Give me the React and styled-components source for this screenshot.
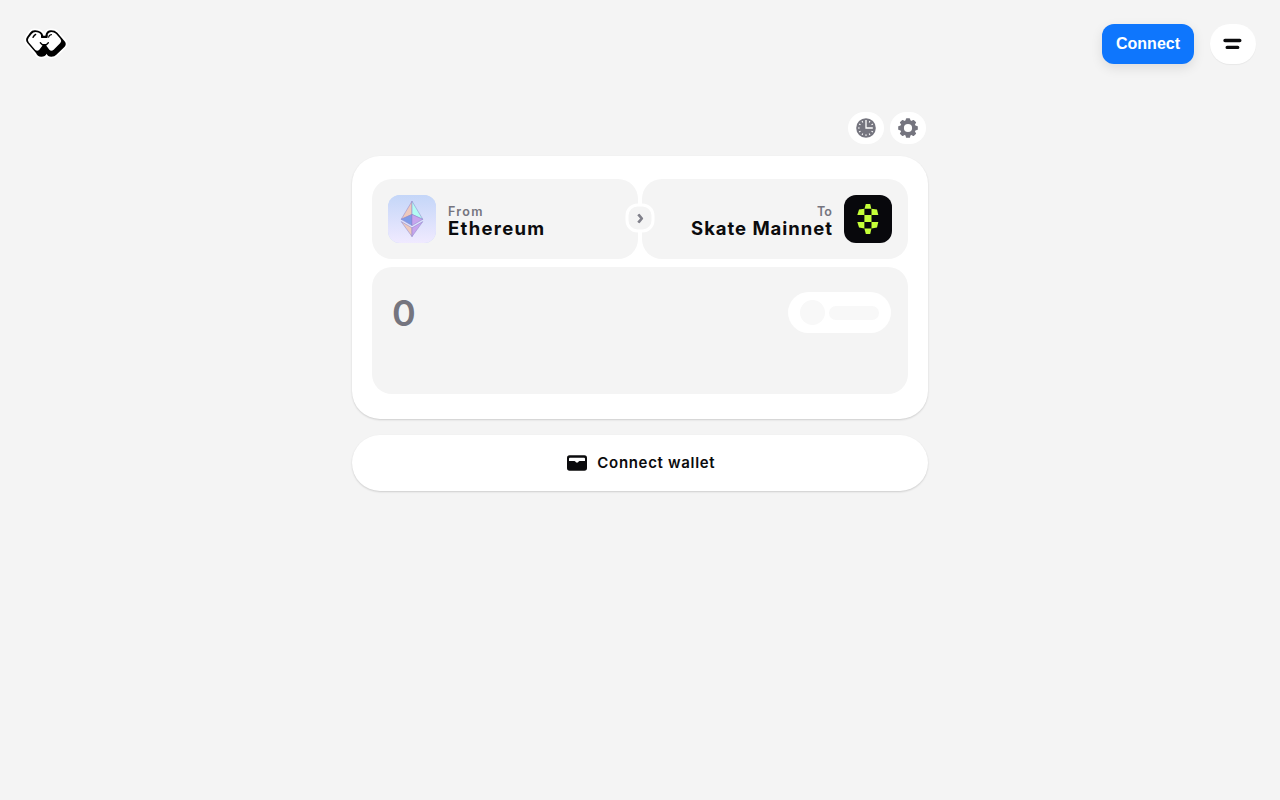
import React from 'react'
import styled, { createGlobalStyle } from 'styled-components'

const GlobalStyle = createGlobalStyle`
    * {
        box-sizing: border-box;
    }
    body {
        margin: 0;
        background: #f4f4f4;
        color: #0b0b0d;
        font-family: Inter, "Liberation Sans", sans-serif;
    }
    button {
        border: none;
        padding: 0;
        font-family: inherit;
        color: inherit;
        cursor: pointer;
    }
    svg {
        display: block;
        flex-shrink: 0;
    }
`
const Page = styled.div`
    min-height: 100vh;
`
const Header = styled.header`
    height: 88px;
    padding: 24px;
    display: flex;
    justify-content: space-between;
`
const HeaderRight = styled.div`
    display: flex;
    gap: 16px;
`
const ConnectButton = styled.button`
    width: 92px;
    height: 40px;
    border-radius: 12px;
    background: #0e76fd;
    color: #fff;
    font: bold 16px/20px "Liberation Sans", Arial, sans-serif;
    box-shadow: 0 4px 12px rgba(0, 0, 0, 0.1);
`
const RoundButton = styled.button`
    width: ${(p) => p.$width}px;
    height: ${(p) => p.$height}px;
    border-radius: 20px;
    background: #fff;
    display: flex;
    align-items: center;
    justify-content: center;
    box-shadow: ${(p) => (p.$raised ? '0 1px 1px rgba(0, 0, 0, 0.05)' : 'none')};
`
const Main = styled.main`
    width: 576px;
    margin: 0 auto;
    padding-top: 24px;
`
const Toolbar = styled.div`
    display: flex;
    justify-content: flex-end;
    gap: 6px;
    padding-right: 2px;
    margin-bottom: 12px;
`
const Card = styled.section`
    height: 263px;
    padding: 23px 20px 25px;
    border-radius: 28px;
    background: #fff;
    box-shadow: 0 1px 2px rgba(0, 0, 0, 0.16);
    display: flex;
    flex-direction: column;
    gap: 8px;
`
const Chains = styled.div`
    position: relative;
    display: flex;
    gap: 4px;
`
const ChainBox = styled.div`
    flex: 1;
    height: 80px;
    padding: 16px;
    border-radius: 20px;
    background: #f4f4f4;
    display: flex;
    align-items: center;
    gap: 12px;
    flex-direction: ${(p) => (p.$reverse ? 'row-reverse' : 'row')};
    text-align: ${(p) => (p.$reverse ? 'right' : 'left')};
`
const ChainIcon = styled.div`
    width: 48px;
    height: 48px;
    border-radius: 12px;
    overflow: hidden;
    background: ${(p) => p.$bg};
`
const ChainText = styled.div`
    display: flex;
    flex-direction: column;
    padding-top: 6px;
`
const Label = styled.span`
    font-size: 12.5px;
    line-height: 14px;
    font-weight: 600;
    letter-spacing: ${(p) => p.$spacing};
    margin-right: -${(p) => p.$spacing};
    color: #75757f;
`
const ChainName = styled.span`
    margin-bottom: 2px;
    font-size: 18.5px;
    line-height: 18px;
    font-weight: 700;
    letter-spacing: ${(p) => p.$spacing};
    margin-right: -${(p) => p.$spacing};
    white-space: nowrap;
`
// sits over the gap between both chains
const SwapButton = styled.button`
    position: absolute;
    top: 50%;
    left: 50%;
    transform: translate(-50%, -50%);
    width: 29px;
    height: 29px;
    margin-top: -1px;
    border: 3px solid #fff;
    border-radius: 12px;
    background: #f4f4f4;
    display: flex;
    align-items: center;
    justify-content: center;
`
const AmountBox = styled.div`
    height: 127px;
    padding: 25px 17px 0 20px;
    border-radius: 20px;
    background: #f4f4f4;
    display: flex;
    justify-content: space-between;
    align-items: flex-start;
`
const Amount = styled.div`
    font-size: 36px;
    line-height: 42px;
    font-weight: 600;
    color: #75757f;
`
const TokenSkeleton = styled.div`
    width: 103px;
    height: 41px;
    padding: 0 12px;
    border-radius: 21px;
    background: #fff;
    display: flex;
    align-items: center;
    gap: 4px;
`
const Bone = styled.div`
    width: ${(p) => p.$width}px;
    height: ${(p) => p.$height}px;
    border-radius: 13px;
    background: #f8f8f8;
`
const WalletButton = styled.button`
    width: 100%;
    height: 56px;
    margin-top: 16px;
    border-radius: 28px;
    background: #fff;
    display: flex;
    align-items: center;
    justify-content: center;
    gap: 10px;
    padding-left: 2px;
    font-size: 15px;
    line-height: 18px;
    font-weight: 600;
    letter-spacing: 0.68px;
    box-shadow: 0 1px 2px rgba(0, 0, 0, 0.16);
`
const WalletLabel = styled.span`
    margin-right: -0.68px;
`

const Logo = () => (
    <svg width="44" height="40" viewBox="24 12 132 120">
        <path
            d="M58 31Q48 30 42 38L33 51Q27 60 34 69L60 99Q64 110 76 110Q88 110 92 101Q95 110 106 110Q116 110 121 104L146 80Q152 73 147 65L124 38Q117 31 105 31Q91 31 88 47H82Q77 32 58 31Z"
            fill="#000"
            stroke="#fff"
            strokeWidth="11"
            strokeLinejoin="round"
            paintOrder="stroke"
        />
        <path
            d="M59 36Q51 36 47 42L38 53Q33 60 38 67L58 90Q64 95 70 89L79 77V74H91V77L100 89Q106 95 113 89L133 69Q138 62 133 56L120 41Q114 36 106 36Q94 37 93 53H77Q76 37 59 36Z"
            fill="#fff"
        />
        <path
            d="M73 68L79 74H91L97 68M51 52Q54 46 59 43M77 46V52H93V46M98 51Q99 45 106 44"
            fill="none"
            stroke="#000"
            strokeWidth="4"
            strokeLinecap="round"
            strokeLinejoin="round"
        />
    </svg>
)

const MenuIcon = () => (
    <svg width="20" height="12" viewBox="0 0 20 12" stroke="#0b0b0d" strokeWidth="3.4" strokeLinecap="round">
        <path d="M2 2.5H16.8M4.2 9.4H14.7" />
    </svg>
)

const ClockIcon = () => (
    <svg width="20" height="20" viewBox="0 0 20 20">
        <circle cx="10" cy="10" r="9.8" fill="#75757f" />
        {[30, 60, 120, 150, 180, 210, 240, 270, 300, 330].map((deg) => (
            <path key={deg} d="M10 2V3.7" stroke="#fff" strokeWidth="1" transform={`rotate(${deg} 10 10)`} />
        ))}
        <path d="M10 2V10H16.8" fill="none" stroke="#fff" strokeWidth="1.3" />
    </svg>
)

const GearIcon = () => (
    <svg width="20" height="20" viewBox="0 0 20 20" fill="none" stroke="#75757f">
        <circle cx="10" cy="10" r="6" strokeWidth="3.8" />
        {[0, 45, 90, 135].map((deg) => (
            <path
                key={deg}
                d="M8.7 1L8.3 3.5H11.7L11.3 1ZM8.7 19L8.3 16.5H11.7L11.3 19Z"
                fill="#75757f"
                strokeWidth="1.6"
                strokeLinejoin="round"
                transform={`rotate(${deg} 10 10)`}
            />
        ))}
    </svg>
)

const EthereumIcon = () => (
    <svg width="48" height="48" viewBox="0 0 48 48">
        <defs>
            <linearGradient id="ethBg" x1="0" y1="0" x2="0" y2="1">
                <stop stopColor="#c4d6f8" />
                <stop offset="1" stopColor="#f0eaff" />
            </linearGradient>
        </defs>
        <rect width="48" height="48" fill="url(#ethBg)" />
        <g stroke="#8b83c8" strokeWidth=".5" strokeLinejoin="round">
            <path d="M24 6.2L13.2 24.3L24 19.4Z" fill="#eec9bd" />
            <path d="M24 6.2L34.8 24.3L24 19.4Z" fill="#b3fbf3" />
            <path d="M24 19.4L13.2 24.3L24 30.6Z" fill="#809ce8" />
            <path d="M24 19.4L34.8 24.3L24 30.6Z" fill="#c7a5ed" />
            <path d="M13.2 26.6L24 32.8V41.6Z" fill="#eec9bd" />
            <path d="M34.8 26.6L24 32.8V41.6Z" fill="#c7a5ed" />
        </g>
    </svg>
)

const SkateIcon = () => (
    <svg width="48" height="48" viewBox="0 0 48 48" fill="#c5ff38">
        <path d="M21.8 9H26.2L27.3 13.8H20.5Z" />
        <path d="M15 14.4L20.4 13.8V19.9H13.3Z" />
        <path d="M27.5 13.8L33 14.4L34.3 19.9H27.5Z" />
        <path d="M20.4 20H27.5V27H20.4Z" />
        <path d="M13.3 27H20.4V33.5L15 32.6Z" />
        <path d="M27.5 27H34.3L33 32.6L27.5 33.5Z" />
        <path d="M20.4 33.5H27.5L26.2 39H21.8Z" />
    </svg>
)

const ChevronIcon = () => (
    <svg width="8" height="10" viewBox="0 0 8 10" fill="none" stroke="#80808a" strokeWidth="2.7">
        <path d="M1.8 .8L5.3 5L1.8 9.2" strokeLinejoin="round" />
    </svg>
)

const WalletIcon = () => (
    <svg width="20" height="16" viewBox="0 0 20 16">
        <rect y=".3" width="20" height="15.4" rx="2.6" fill="#0b0b0d" />
        <path d="M2 3.7Q2 2.7 3 2.7H17Q18 2.7 18 3.7V6H12.7Q11.8 6 11.5 6.7Q11 7.6 10 7.6Q9 7.6 8.5 6.7Q8.2 6 7.3 6H2Z" fill="#fff" />
    </svg>
)

const App = () => {
    return (
        <Page>
            <GlobalStyle />
            <Header>
                <Logo />
                <HeaderRight>
                    <ConnectButton>Connect</ConnectButton>
                    <RoundButton $width={46} $height={40} $raised aria-label="Menu">
                        <MenuIcon />
                    </RoundButton>
                </HeaderRight>
            </Header>
            <Main>
                <Toolbar>
                    <RoundButton $width={36} $height={32} aria-label="History">
                        <ClockIcon />
                    </RoundButton>
                    <RoundButton $width={36} $height={32} aria-label="Settings">
                        <GearIcon />
                    </RoundButton>
                </Toolbar>
                <Card>
                    <Chains>
                        <ChainBox>
                            <ChainIcon $bg="#c4d6f8">
                                <EthereumIcon />
                            </ChainIcon>
                            <ChainText>
                                <Label $spacing="1.3px">From</Label>
                                <ChainName $spacing="1.3px">Ethereum</ChainName>
                            </ChainText>
                        </ChainBox>
                        <ChainBox $reverse>
                            <ChainIcon $bg="#08080c">
                                <SkateIcon />
                            </ChainIcon>
                            <ChainText>
                                <Label $spacing="0.2px">To</Label>
                                <ChainName $spacing="0.96px">Skate Mainnet</ChainName>
                            </ChainText>
                        </ChainBox>
                        <SwapButton aria-label="Swap">
                            <ChevronIcon />
                        </SwapButton>
                    </Chains>
                    <AmountBox>
                        <Amount>0</Amount>
                        <TokenSkeleton>
                            <Bone $width={25} $height={25} />
                            <Bone $width={50} $height={14} />
                        </TokenSkeleton>
                    </AmountBox>
                </Card>
                <WalletButton>
                    <WalletIcon />
                    <WalletLabel>Connect wallet</WalletLabel>
                </WalletButton>
            </Main>
        </Page>
    )
}

export default App
